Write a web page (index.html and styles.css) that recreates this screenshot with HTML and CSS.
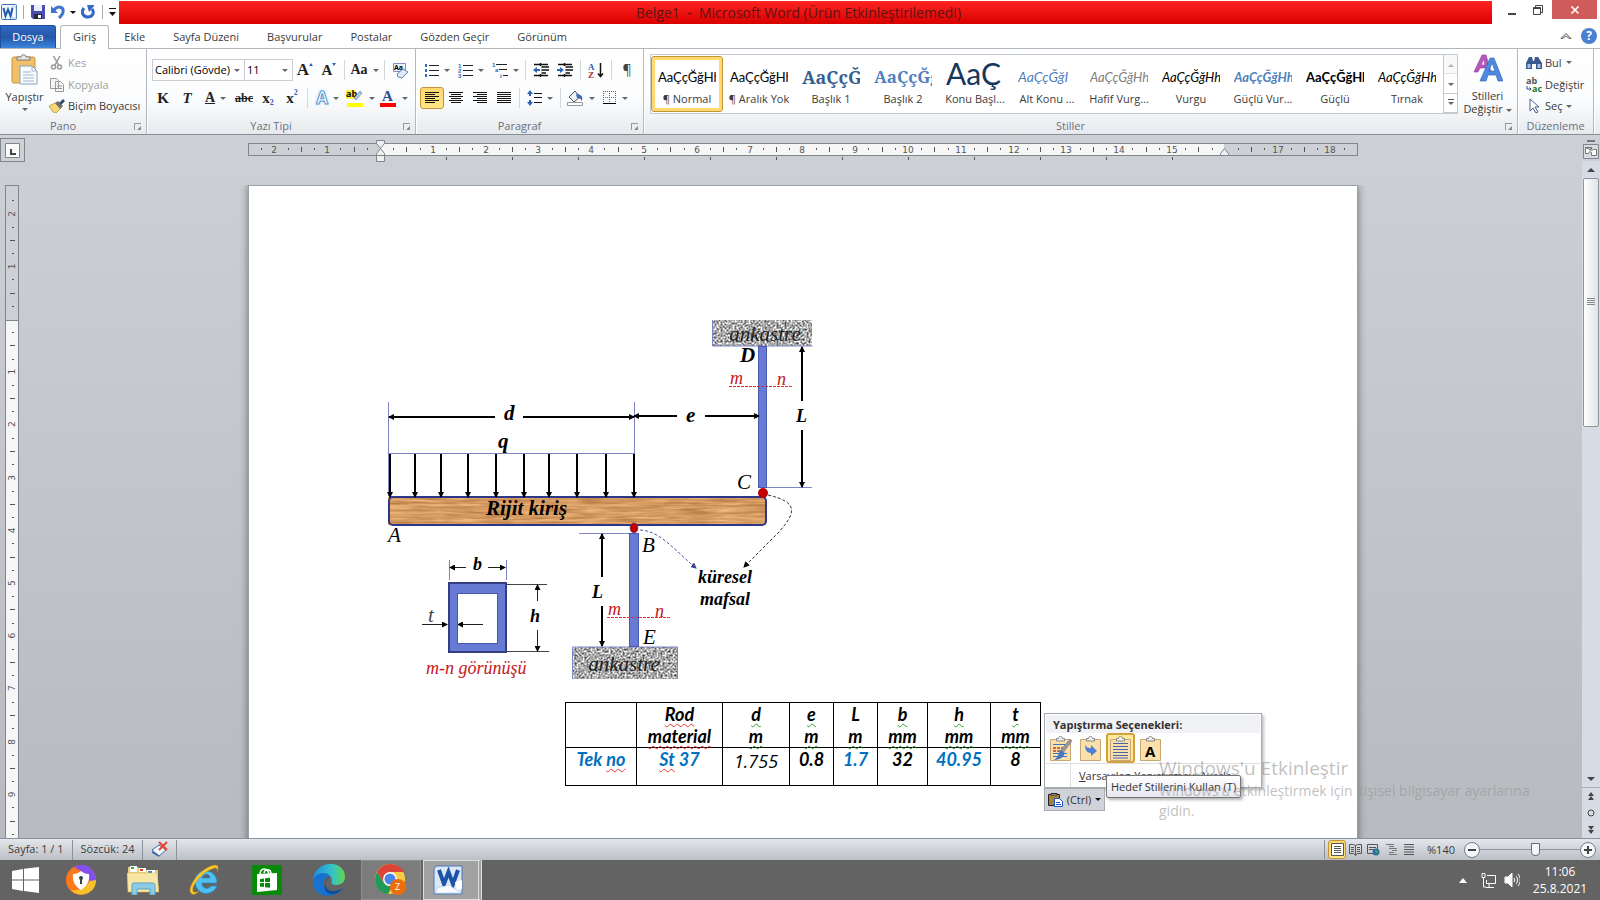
FILE: index.html
```
<!DOCTYPE html>
<html lang="tr">
<head>
    <meta charset="UTF-8">
    <meta name="viewport" content="width=device-width, initial-scale=1.0">
    <title>Belge1 - Microsoft Word</title>
    <link rel="stylesheet" href="styles.css">
</head>
<body>
    <header class="titlebar">
        <div class="quick">
            <svg width="16" height="16" viewBox="0 0 16 16"><rect x=".5" y=".5" width="15" height="15" rx="1" fill="#eef4fc" stroke="#3f6fb5"/><path d="M11 3h4v11h-4z" fill="#fff" stroke="#8aa9d8" stroke-width=".6"/><path d="M2.500 4l2 8 2.500-6.500L9.500 12l2-8" fill="none" stroke="#1f5cab" stroke-width="2"/></svg>
            <span class="bar"></span>
            <button class="tool" aria-label="Kaydet"><svg width="14" height="14" viewBox="0 0 14 14"><path d="M0 0h14v14H2l-2-2z" fill="#4a4fae"/><path d="M3 0h8v6H3z" fill="#e9effa"/><path d="M3 9h8v5H3z" fill="#2b2b3d"/><path d="M7 10h3v3H7z" fill="#fff"/></svg></button>
            <button class="tool wide" aria-label="Geri Al"><svg width="14" height="14" viewBox="0 0 14 14"><path d="M3 5c4-5 10-3 9 2 0 2-2 4-4 6" fill="none" stroke="#3f74cf" stroke-width="3"/><path d="M0 1v7h7z" fill="#3f74cf"/></svg><i class="caret dark"></i></button>
            <button class="tool" aria-label="Yinele"><svg width="14" height="14" viewBox="0 0 14 14"><path d="M3 3c-4 5 0 9 4 9s7-4 4-8" fill="none" stroke="#3468c8" stroke-width="3"/><path d="M6 0h7v1L8 7z" fill="#3468c8"/></svg></button>
            <span class="bar"></span>
            <svg width="8" height="8" viewBox="0 0 8 8"><path d="M0 0h7v1H0zM0 4h7L3.500 8z" fill="#111"/></svg>
        </div>
        <div class="title">Belge1&nbsp; -&nbsp; Microsoft Word (Ürün Etkinleştirilemedi)</div>
        <div class="window-buttons">
            <button aria-label="Simge durumuna küçült"><svg width="12" height="12"><path d="M2 9h8v2H2z" fill="#444"/></svg></button>
            <button aria-label="Önceki boyut"><svg width="12" height="12" fill="none" stroke="#444"><path d="M1.500 3.500h7v7h-7zM1 4.500h8M3.500 3V1.500h7v7H9"/></svg></button>
            <button class="close" aria-label="Kapat"><svg width="10" height="10"><path d="M1.500 1.500l7 7M8.500 1.500l-7 7" stroke="#fff" stroke-width="1.600"/></svg></button>
        </div>
    </header>

    <nav class="tabs">
        <button class="file">Dosya</button>
        <a class="active" href="#">Giriş</a>
        <a href="#">Ekle</a>
        <a href="#">Sayfa Düzeni</a>
        <a href="#">Başvurular</a>
        <a href="#">Postalar</a>
        <a href="#">Gözden Geçir</a>
        <a href="#">Görünüm</a>
        <div class="help">
            <svg width="12" height="8" viewBox="0 0 12 8" fill="none" stroke="#555"><path d="M2.500 6.500H1L6 1.500l5 5H9.500L6 4z"/></svg>
            <button class="help-button" aria-label="Yardım">?</button>
        </div>
    </nav>

    <section class="ribbon">
        <div class="group clipboard">
            <div class="group-body">
                <button class="paste">
                    <svg width="28" height="32" viewBox="0 0 28 32"><rect x="1" y="3" width="23" height="26" rx="2" fill="#f0bf68" stroke="#c8943c"/><path d="M6 6V3h4c0-3 5-3 5 0h4v3z" fill="#e8e8e8" stroke="#777"/><path d="M9 12h12l5 5v13H9z" fill="#fafdff" stroke="#8aa0bd"/><path d="M21 12v5h5M12 18h8M12 21h11M12 24h11M12 27h11" fill="none" stroke="#9bb3cf"/></svg>
                    <span>Yapıştır</span>
                    <i class="caret"></i>
                </button>
                <div class="stack">
                    <button class="line off"><svg width="16" height="14" viewBox="0 0 16 14" fill="none" stroke="#999" stroke-width="1.500"><path d="M4.500 0l5 9M11 0L6 9"/><circle cx="4.500" cy="11" r="2"/><circle cx="10.500" cy="11" r="2"/></svg>Kes</button>
                    <button class="line off"><svg width="16" height="14" viewBox="0 0 16 14" fill="#f4f4f4" stroke="#999"><path d="M1.500.5h6l2 2v8h-8zM6.500 3.500h5l3 3v7h-8zM8 8h5M8 10.500h5"/></svg>Kopyala</button>
                    <button class="line"><svg width="16" height="14" viewBox="0 0 16 14"><path d="M0 7l6-3 6 5-5 5-3-1z" fill="#f6d873" stroke="#a8862c" stroke-width=".7"/><path d="M6 4l3-2 5 5-3 3z" fill="#707070"/><path d="M10 4l4-4 2 2-4 4z" fill="#34496f"/></svg>Biçim Boyacısı</button>
                </div>
            </div>
            <div class="group-name">Pano<i class="launcher"></i></div>
        </div>

        <div class="group font">
            <div class="group-body rows">
                <div class="row">
                    <span class="combo family"><select aria-label="Yazı Tipi"><option>Calibri (Gövde)</option></select></span>
                    <span class="combo size"><select aria-label="Yazı Tipi Boyutu"><option>11</option></select></span>
                    <button class="tool serif big">A<sup class="up"></sup></button>
                    <button class="tool serif">A<sup class="down"></sup></button>
                    <span class="sep"></span>
                    <button class="tool wide serif">Aa<i class="caret"></i></button>
                    <span class="sep"></span>
                    <button class="tool" aria-label="Biçimlendirmeyi Temizle"><svg width="17" height="17" viewBox="0 0 17 17"><path d="M1.500 1.500h12v8h-12z" fill="#eef3fb" stroke="#7c93b8"/><text x="2" y="8" class="tiny">Aa</text><path d="M5 12l6-5 5 3-6 6-4-1z" fill="#dde7fa" stroke="#6a83b5"/></svg></button>
                </div>
                <div class="row">
                    <button class="tool serif"><b>K</b></button>
                    <button class="tool serif"><i>T</i></button>
                    <button class="tool wide serif"><u>A</u><i class="caret"></i></button>
                    <button class="tool serif small"><s>abc</s></button>
                    <button class="tool serif">x<sub>2</sub></button>
                    <button class="tool serif">x<sup>2</sup></button>
                    <span class="sep"></span>
                    <button class="tool wide glow">A<i class="caret"></i></button>
                    <button class="tool wide" aria-label="Vurgu rengi"><svg width="18" height="18" viewBox="0 0 18 18"><path d="M0 1h10v9H0z" fill="#ffef3e"/><text x="0" y="8" class="ab">ab</text><path d="M8 9l6-7 2 2-6 7z" fill="#b8c9e6" stroke="#667a9c" stroke-width=".7"/><path d="M1 14h16v4H1z" fill="#ff0"/></svg><i class="caret"></i></button>
                    <button class="tool wide" aria-label="Yazı rengi"><svg width="18" height="18" viewBox="0 0 18 18"><text x="3" y="12" class="fontcolor">A</text><path d="M1 14h16v4H1z" fill="red"/></svg><i class="caret"></i></button>
                </div>
            </div>
            <div class="group-name">Yazı Tipi<i class="launcher"></i></div>
        </div>

        <div class="group paragraph">
            <div class="group-body rows">
                <div class="row">
                    <button class="tool wide" aria-label="Madde İşaretleri"><svg width="14" height="14"><path d="M4 2.500h10M4 7.500h10M4 12.500h10" stroke="#222"/><path d="M0 1h2v3H0zM0 6h2v3H0zM0 11h2v3H0z" fill="#3b66b0"/></svg><i class="caret"></i></button>
                    <button class="tool wide" aria-label="Numaralandırma"><svg width="15" height="15"><path d="M5 2.500h10M5 7.500h10M5 12.500h10" stroke="#222"/><text x="0" y="5" class="digit">1</text><text x="0" y="10" class="digit">2</text><text x="0" y="15" class="digit">3</text></svg><i class="caret"></i></button>
                    <button class="tool wide" aria-label="Çok Düzeyli Liste"><svg width="16" height="16"><path d="M4 2.500h11M7 7.500h8M11 13.500h5" stroke="#222"/><text x="0" y="5" class="digit">1</text><text x="3" y="10" class="digit">a</text><text x="8" y="16" class="digit">i</text></svg><i class="caret"></i></button>
                    <span class="sep"></span>
                    <button class="tool" aria-label="Girintiyi Azalt"><svg width="16" height="14"><path d="M1 1.500h14M8 4h8M8 7h8M8 10h5M1 12.500h14M7.500 0v14" stroke="#111" stroke-width="1.500"/><path d="M7 3v8" stroke="#fff" stroke-width="3"/><path d="M0 7l4-3v2h3v2H4v2z" fill="#2f62bd"/></svg></button>
                    <button class="tool" aria-label="Girintiyi Artır"><svg width="16" height="14"><path d="M1 1.500h14M8 4h8M8 7h8M8 10h5M1 12.500h14M7.500 0v14" stroke="#111" stroke-width="1.500"/><path d="M7 3v8" stroke="#fff" stroke-width="3"/><path d="M7 7L3 4v2H0v2h3v2z" fill="#2f62bd"/></svg></button>
                    <span class="sep"></span>
                    <button class="tool" aria-label="Sırala"><svg width="16" height="17"><text x="0" y="8" class="sort-a">A</text><text x="0" y="16" class="sort-z">Z</text><path d="M12.500 1v13M10 11.500l2.500 3 2.500-3" fill="none" stroke="#111" stroke-width="1.500"/></svg></button>
                    <span class="sep"></span>
                    <button class="tool mark">¶</button>
                </div>
                <div class="row">
                    <button class="tool on" aria-label="Sola Hizala"><svg width="14" height="12"><path d="M0 .5h14M0 2.500h10M0 4.500h14M0 6.500h10M0 8.500h14M0 10.500h10" stroke="#111"/></svg></button>
                    <button class="tool" aria-label="Ortala"><svg width="14" height="12"><path d="M0 .5h14M2 2.500h10M0 4.500h14M2 6.500h10M0 8.500h14M2 10.500h10" stroke="#111"/></svg></button>
                    <button class="tool" aria-label="Sağa Hizala"><svg width="14" height="12"><path d="M0 .5h14M4 2.500h10M0 4.500h14M4 6.500h10M0 8.500h14M4 10.500h10" stroke="#111"/></svg></button>
                    <button class="tool" aria-label="İki Yana Yasla"><svg width="14" height="12"><path d="M0 .5h14M0 2.500h14M0 4.500h14M0 6.500h14M0 8.500h14M0 10.500h14" stroke="#111"/></svg></button>
                    <span class="sep"></span>
                    <button class="tool wide" aria-label="Satır Aralığı"><svg width="15" height="16"><path d="M7 3.500h8M7 7.500h8M7 12.500h8" stroke="#111"/><path d="M0 4l3-4 3 4H4v2H2V4zM0 12l3 4 3-4H4v-2H2v2z" fill="#2f62bd"/></svg><i class="caret"></i></button>
                    <span class="sep"></span>
                    <button class="tool wide" aria-label="Gölgelendirme"><svg width="17" height="16"><path d="M2 7l6-6 5 6-6 5z" fill="#eef2f8" stroke="#555"/><path d="M9 4c5 0 7 2 6 7-2-3-3-3-5-3z" fill="#3c69b8"/><path d="M.5 12.500h15v3H.5z" fill="#fff" stroke="#999"/></svg><i class="caret"></i></button>
                    <button class="tool wide" aria-label="Kenarlıklar"><svg width="14" height="14"><path d="M.5 0v12M6.500 0v12M12.500 0v12M0 .5h13M0 6.500h13" stroke="#666" stroke-dasharray="1 1"/><path d="M0 12.500h13" stroke="#000"/></svg><i class="caret"></i></button>
                </div>
            </div>
            <div class="group-name">Paragraf<i class="launcher"></i></div>
        </div>

        <div class="group styles">
            <div class="group-body">
                <div class="gallery">
                    <button class="style selected"><span class="sample">AaÇçĞğHh</span><span>¶ Normal</span></button>
                    <button class="style"><span class="sample">AaÇçĞğHh</span><span>¶ Aralık Yok</span></button>
                    <button class="style"><span class="sample h1">AaÇçĞğ</span><span>Başlık 1</span></button>
                    <button class="style"><span class="sample h2">AaÇçĞğ</span><span>Başlık 2</span></button>
                    <button class="style"><span class="sample heading">AaÇ</span><span>Konu Başl...</span></button>
                    <button class="style"><span class="sample subtitle">AaÇçĞğI</span><span>Alt Konu ...</span></button>
                    <button class="style"><span class="sample it light">AaÇçĞğHh</span><span>Hafif Vurg...</span></button>
                    <button class="style"><span class="sample it">AaÇçĞğHh</span><span>Vurgu</span></button>
                    <button class="style"><span class="sample it strong blue">AaÇçĞğHh</span><span>Güçlü Vur...</span></button>
                    <button class="style"><span class="sample strong">AaÇçĞğHh</span><span>Güçlü</span></button>
                    <button class="style"><span class="sample it">AaÇçĞğHh</span><span>Tırnak</span></button>
                    <div class="gallery-scroll">
                        <button aria-label="Yukarı"><i class="caret flip"></i></button>
                        <button aria-label="Aşağı"><i class="caret"></i></button>
                        <button aria-label="Diğer"><i class="caret lined"></i></button>
                    </div>
                </div>
                <button class="change">
                    <svg width="30" height="28" viewBox="0 0 30 28"><path d="M1 18L9 1h4l5 17h-4l-1-4H7l-2 4zM8 11h4l-1-6z" fill="#b557bd" stroke="#8a3a95" stroke-width=".6"/><path d="M7 27L17 4h4l9 23h-5l-2-6h-8l-2 6zM16 17h6l-3-8z" fill="#4d8be0" stroke="#2b5fae" stroke-width=".6"/></svg>
                    <span>Stilleri</span>
                    <span>Değiştir <i class="caret"></i></span>
                </button>
            </div>
            <div class="group-name">Stiller<i class="launcher"></i></div>
        </div>

        <div class="group editing">
            <div class="group-body">
                <div class="stack">
                    <button class="line"><svg width="16" height="14" viewBox="0 0 16 14"><path d="M0 13V7l3-6h3l1 4h1l1-4h3l4 6v6h-6V8H6v5z" fill="#39598f"/><path d="M1.500 8h3v4h-3zM11.500 8h3v4h-3z" fill="#a8c0e4"/></svg>Bul <i class="caret"></i></button>
                    <button class="line"><svg width="16" height="16" viewBox="0 0 16 16"><text x="0" y="7" class="rep">ab</text><text x="6" y="15" class="rep green">ac</text><path d="M1 9v3h4M3.500 10.500L5 12l-1.500 1.500" fill="none" stroke="#2c4f94"/></svg>Değiştir</button>
                    <button class="line"><svg width="16" height="16" viewBox="0 0 16 16"><path d="M4 1v12l3-3 3 5 2-1-3-5h4z" fill="#fff" stroke="#46608f"/></svg>Seç <i class="caret"></i></button>
                </div>
            </div>
            <div class="group-name">Düzenleme</div>
        </div>
    </section>

    <main class="workspace">
        <button class="tab-stop" aria-label="Sekme"><svg width="15" height="15"><path d="M.5.5h14v14H.5z" fill="#fafafa" stroke="#7f868e"/><path d="M5 6v6h6v-2H7V6z" fill="#444"/></svg></button>
        <svg id="hruler" class="hruler" width="1111" height="24" viewBox="0 0 1111 24"></svg>
        <div class="ruler-toggle"><span></span><svg width="16" height="16" fill="none" stroke="#7f868e"><path d="M.5.5h15v14H.5z" fill="#d8dce1"/><path d="M3 3.500h4l1 2 1-2h-2M2.500 3.500v6h3l1-2 2 1v3h5v-6h-3l-2 1z" fill="#fff" stroke="#777"/></svg></div>

        <svg id="vruler" class="vruler" width="14" height="1400" viewBox="0 0 14 1400"></svg>
        <div class="canvas">
            <article class="page">
                <svg class="beam" width="460" height="385" viewBox="0 0 460 385">
                    <defs>
                        <filter id="granite" x="0" y="0" width="100%" height="100%" color-interpolation-filters="sRGB">
                            <feTurbulence type="fractalNoise" baseFrequency="0.5" numOctaves="2" seed="4"/>
                            <feColorMatrix values="1.500 0 0 0 -.08  1.500 0 0 0 -.08  1.500 0 0 0 -.08  0 0 0 0 1"/>
                        </filter>
                        <filter id="wood" x="0" y="0" width="100%" height="100%" color-interpolation-filters="sRGB">
                            <feTurbulence type="fractalNoise" baseFrequency="0.03 0.4" numOctaves="3" seed="8"/>
                            <feColorMatrix values=".35 0 0 0 .66  .35 0 0 0 .43  .3 0 0 0 .23  0 0 0 0 1"/>
                        </filter>
                        <marker id="arrow" markerUnits="userSpaceOnUse" markerWidth="6" markerHeight="6" refX="5" refY="3" orient="auto-start-reverse"><path d="M0 0l6 3-6 3z" fill="#000"/></marker>
                        <marker id="arrow-blue" markerUnits="userSpaceOnUse" markerWidth="6" markerHeight="6" refX="5" refY="3" orient="auto"><path d="M0 0l6 3-6 3z" fill="#3a4390"/></marker>
                    </defs>

                    <!-- walls -->
                    <rect x="333" y="3" width="100" height="26" filter="url(#granite)"/>
                    <rect x="193" y="330" width="105" height="32" filter="url(#granite)"/>
                    <path class="thin" d="M333.500 3v26h100M193.500 362v-32h105v32"/>
                    <text x="386" y="24" class="wall">ankastre</text>
                    <text x="245" y="354" class="wall">ankastre</text>

                    <!-- rods -->
                    <rect class="rod" x="379.500" y="29.500" width="8" height="141"/>
                    <rect class="rod" x="250.500" y="216.500" width="9" height="113"/>

                    <!-- beam -->
                    <rect x="9" y="180" width="378" height="28" filter="url(#wood)"/>
                    <rect class="beam-edge" x="10" y="180" width="377" height="28" rx="4"/>
                    <path class="thin" d="M9.500 85v94M255.500 85v52M9 136.500h246M388 170.500h45M200 216.500h50M70.500 243v20M127.500 243v20"/>
                    <path d="M128 267.500h40M128 334.500h42" stroke="#444"/>

                    <g class="load">
                        <path d="M11 137v43"/><path d="M36 137v43"/><path d="M62 137v43"/><path d="M89 137v43"/><path d="M117 137v43"/>
                        <path d="M145 137v43"/><path d="M170 137v43"/><path d="M198 137v43"/><path d="M227 137v43"/><path d="M255 137v43"/>
                        <path d="M116 100H10"/><path d="M144 100h111"/><path d="M298 99h-43"/><path d="M326 99h54"/>
                        <path d="M423 84V30"/><path d="M423 113v57"/><path d="M223 260v-43"/><path d="M223 289v40"/>
                    </g>
                    <g class="measure">
                        <path d="M87 250.500H71"/><path d="M109 250.500h17"/><path d="M158.500 284v-16"/><path d="M158.500 313v21"/>
                        <path d="M43 307.500h25"/><path d="M104 307.500H79"/>
                    </g>

                    <path class="cut" d="M350 69.500h63M228 300.500h64"/>
                    <ellipse cx="384" cy="176" rx="5" ry="5" fill="#c00000"/>
                    <ellipse cx="255" cy="211" rx="4" ry="5" fill="#c00000" stroke="#3a4390" stroke-width=".5"/>
                    <path class="dash blue-dash" d="M261 213c20 1 32 18 56 38"/>
                    <path class="dash" d="M389 178c30 7 29 17 10 38l-34 34"/>

                    <!-- tube section -->
                    <path d="M70 266h57v69H70zM78 276v51h41v-51z" fill="#677bd5" fill-rule="evenodd"/>
                    <rect x="70" y="266" width="57" height="69" fill="none" stroke="#343d80" stroke-width="2"/>
                    <rect x="78.500" y="276.500" width="40" height="50" fill="none" stroke="#4a55a5"/>

                    <text x="361" y="45" class="bold">D</text>
                    <text x="358" y="172">C</text>
                    <text x="9" y="225">A</text>
                    <text x="263" y="235">B</text>
                    <text x="264" y="327">E</text>
                    <text x="125" y="103" class="bold">d</text>
                    <text x="119" y="131" class="bold">q</text>
                    <text x="307" y="105" class="bold">e</text>
                    <text x="417" y="105" class="name">L</text>
                    <text x="213" y="281" class="name">L</text>
                    <text x="94" y="253" class="name">b</text>
                    <text x="151" y="305" class="name">h</text>
                    <text x="49" y="305" class="thin-text">t</text>
                    <text x="107" y="198" class="bold">Rijit kiriş</text>
                    <text x="346" y="266" class="joint">küresel</text>
                    <text x="346" y="288" class="joint">mafsal</text>
                    <g class="red">
                        <text x="351" y="67">m</text>
                        <text x="398" y="68">n</text>
                        <text x="229" y="298">m</text>
                        <text x="276" y="300">n</text>
                        <text x="47" y="357">m-n görünüşü</text>
                    </g>
                </svg>

                <div class="table-line">
                    <table class="values">
                        <colgroup><col class="c71"><col class="c86"><col class="c67"><col class="c44"><col class="c44"><col class="c50"><col class="c63"><col class="c50"></colgroup>
                        <tr>
                            <th></th>
                            <th><span class="bad">Rod</span><br><span class="bad">material</span></th>
                            <th><span class="gram">d</span><br><span class="gram">m</span></th>
                            <th><span class="gram">e</span><br><span class="gram">m</span></th>
                            <th>L<br><span class="gram">m</span></th>
                            <th><span class="gram">b</span><br><span class="gram">mm</span></th>
                            <th><span class="gram">h</span><br><span class="gram">mm</span></th>
                            <th><span class="gram">t</span><br><span class="gram">mm</span></th>
                        </tr>
                        <tr>
                            <td class="blue">Tek <span class="bad">no</span></td>
                            <td class="blue"><span class="bad">St</span> 37</td>
                            <td class="plain">1.755</td>
                            <td>0.8</td>
                            <td class="blue">1.7</td>
                            <td>32</td>
                            <td class="blue">40.95</td>
                            <td>8</td>
                        </tr>
                    </table>

                    <div class="paste-options">
                        <div class="paste-menu">
                            <div class="paste-title">Yapıştırma Seçenekleri:</div>
                            <div class="paste-icons">
                                <button aria-label="Kaynak Biçimlendirmesini Koru"><svg width="23" height="25" viewBox="0 0 23 25"><path class="board" d="M1.500 3.500h20v21h-20z"/><path class="clip" d="M7.500 5V2.500h2c0-3 4-3 4 0h2V5z"/><path d="M4 8.500h14M4 17.500h14M4 20.500h14" stroke="#4472c4"/><path d="M4 12h12M4 15h10" stroke="#c33c1e" stroke-width="1.500" stroke-dasharray="3 1"/><path d="M21 3l2 2-9 12-3-2z" fill="#999" stroke="#666" stroke-width=".5"/><path d="M12 14l4 3c-2 5-6 7-11 7 4-2 4-7 7-10z" fill="#4a78c0"/></svg></button>
                                <button aria-label="Biçimlendirmeyi Birleştir"><svg width="23" height="25" viewBox="0 0 23 25"><path class="board" d="M1.500 3.500h20v21h-20z"/><path class="clip" d="M7.500 5V2.500h2c0-3 4-3 4 0h2V5z"/><path d="M6 9c2 3 4 3 6 3V9l6 6-6 5v-3c-4 0-6-3-6-8z" fill="#4c7fd6"/></svg></button>
                                <button class="picked" aria-label="Hedef Stillerini Kullan"><svg width="23" height="25" viewBox="0 0 23 25"><path class="board" d="M1.500 3.500h20v21h-20z"/><path class="clip" d="M7.500 5V2.500h2c0-3 4-3 4 0h2V5z"/><path d="M4 7.500h15M4 10.500h15M4 13.500h15M4 16.500h15M4 19.500h15M4 22h15" stroke="#4a62b0"/></svg></button>
                                <button aria-label="Yalnızca Metni Koru"><svg width="23" height="25" viewBox="0 0 23 25"><path class="board" d="M1.500 3.500h20v21h-20z"/><path class="clip" d="M7.500 5V2.500h2c0-3 4-3 4 0h2V5z"/><text x="6" y="21" class="only-text">A</text></svg></button>
                            </div>
                            <a class="paste-default" href="#"><u>V</u>arsayılan Yapıştırmayı Ayarla...</a>
                        </div>
                        <button class="ctrl"><svg width="15" height="15" viewBox="0 0 15 15"><path d="M.5 2.500h11v11H.5z" fill="#a5813a" stroke="#222"/><path d="M3 3V1.500h6V3z" fill="#fff" stroke="#222"/><path d="M6.500 6.500h5l3 3v5h-8z" fill="#fff" stroke="#1b55c4"/><path d="M8 10.500h4M8 12.500h5" stroke="#1b55c4"/></svg>(Ctrl)<i class="caret dark"></i></button>
                        <div class="tooltip">Hedef Stillerini Kullan (T)</div>
                    </div>
                </div>
            </article>
        </div>
        <div class="scrollbar">
            <button aria-label="Yukarı kaydır"><i class="caret big flip"></i></button>
            <div class="track"><div class="thumb"><svg width="8" height="8"><path d="M0 .5h8M0 2.500h8M0 4.500h8M0 6.500h8" stroke="#888"/></svg></div></div>
            <button aria-label="Aşağı kaydır"><i class="caret big"></i></button>
            <button class="first" aria-label="Önceki Sayfa"><svg width="8" height="8"><path d="M1 4l3-4 3 4zM1 8l3-4 3 4z" fill="#444"/></svg></button>
            <button aria-label="Gözatma Nesnesi"><svg width="8" height="8"><circle cx="4" cy="4" r="3" fill="none" stroke="#444"/></svg></button>
            <button aria-label="Sonraki Sayfa"><svg width="8" height="8"><path d="M1 0h6L4 4zM1 4h6L4 8z" fill="#444"/></svg></button>
        </div>

        <div class="activate">
            <h2>Windows'u Etkinleştir</h2>
            <p>Windows'u etkinleştirmek için kişisel bilgisayar ayarlarına gidin.</p>
        </div>
    </main>

    <footer class="status">
        <span class="cell">Sayfa: 1 / 1</span>
        <span class="cell">Sözcük: 24</span>
        <span class="cell"><svg width="17" height="16" viewBox="0 0 17 16"><path d="M1 9l7-5 7 5-7 6z" fill="#f2f6fc" stroke="#4468a8"/><path d="M1 10v2l7 4v-2z" fill="#4468a8"/><path d="M8 1l8 8M16 1L8 9" stroke="#e8432e" stroke-width="2"/></svg></span>
        <div class="views">
            <button class="on" aria-label="Sayfa Düzeni"><svg width="13" height="13"><path d="M.5.5h12v12H.5z" fill="#fff" stroke="#555"/><path d="M3 3.500h7M3 5.500h7M3 7.500h7M3 9.500h7" stroke="#555"/></svg></button>
            <button aria-label="Tam Ekran Okuma"><svg width="13" height="13"><path d="M.5 1.500h4l2 1 2-1h4v9h-4l-2 2-2-2h-4zM6.500 2v10M2 4.500h3M2 6.500h3M2 8.500h3M8 4.500h3M8 6.500h3M8 8.500h3" fill="none" stroke="#555"/></svg></button>
            <button aria-label="Web Düzeni"><svg width="13" height="13"><path d="M.5 1.500h10v9H.5zM2 4.500h7M2 6.500h7" fill="none" stroke="#555"/><circle cx="9" cy="9" r="3.500" fill="#2d6f9f"/><path d="M8 7l3 1-2 3z" fill="#49a55a"/></svg></button>
            <button aria-label="Anahat"><svg width="13" height="13"><path d="M1 1.500h8M4 3.500h5M4 5.500h8M7 7.500h5M4 9.500h5M4 11.500h8" stroke="#777"/></svg></button>
            <button aria-label="Taslak"><svg width="13" height="13"><path d="M1 1.500h10M1 4h10M1 6.500h10M1 9h10M1 11.500h10" stroke="#555"/></svg></button>
        </div>
        <button class="zoom-value">%140</button>
        <div class="zoom">
            <button class="round" aria-label="Uzaklaştır"><svg width="8" height="8"><path d="M0 4h8" stroke="#444" stroke-width="2"/></svg></button>
            <input type="range" min="0" max="100" value="56" aria-label="Yakınlaştırma">
            <button class="round" aria-label="Yakınlaştır"><svg width="8" height="8"><path d="M0 4h8M4 0v8" stroke="#444" stroke-width="2"/></svg></button>
        </div>
    </footer>

    <div class="taskbar">
        <button class="start" aria-label="Başlat"><svg width="27" height="26" viewBox="0 0 27 26" fill="#fff"><path d="M0 4l11-2v10.500H0zM12 1.800L27 0v12.500H12zM0 13.500h11V24L0 22zM12 13.500h15V26l-15-2z"/></svg></button>
        <button aria-label="Avast Secure Browser"><svg width="32" height="32" viewBox="0 0 32 32"><circle cx="16" cy="16" r="15" fill="#f9791c"/><path d="M9 3c9-6 22 0 22 14l-6 2C24 10 17 8 9 3z" fill="#8350ee"/><path d="M31 16c0 14-17 19-25 10 9 1 15-2 19-9z" fill="#f6c22c"/><path d="M8 10c3 0 6-1 8-3 2 2 5 3 8 3 1 8-3 13-8 16-5-3-9-8-8-16z" fill="#fff"/><circle cx="16" cy="14" r="2" fill="#344"/><path d="M15 14h2v6h-2z" fill="#344"/></svg></button>
        <button aria-label="Dosya Gezgini"><svg width="32" height="30" viewBox="0 0 32 30"><path d="M1 2h10l2 3h18v22H1z" fill="#e9cf7c"/><path d="M3 1h7v6H3z" fill="#fff"/><path d="M4 2h3v2H4z" fill="#2aa84a"/><path d="M12 3h7v4h-7z" fill="#fff"/><path d="M13 4h3v2h-3z" fill="#d8402a"/><path d="M20 5h8v3h-8z" fill="#fff"/><path d="M21 6h4v2h-4z" fill="#2f87d8"/><path d="M0 8h30l2 19H1z" fill="#f8e6a4" stroke="#d5b75b" stroke-width=".5"/><path d="M5 30V20c0-2 1-2 2-2h19c1 0 2 1 2 2v10h-5v-6H10v6z" fill="#8dcae6" stroke="#5ba3c6"/></svg></button>
        <button aria-label="Internet Explorer"><svg width="32" height="32" viewBox="0 0 32 32"><path d="M28 22c-5 12-23 9-22-6C7 4 28 3 28 19H13c0 6 6 7 9 3zM13 14h8c0-5-7-5-8 0z" fill="#4fc0f0" stroke="#2186c8" stroke-width=".7"/><path d="M3 30C-4 27 8 7 22 2c8-3 8 2 6 6 1-4-1-5-5-3C12 9 2 23 4 27c1 2 4 1 6 0-3 3-5 4-7 3z" fill="#f5c52c" stroke="#c18c12" stroke-width=".4"/></svg></button>
        <button aria-label="Mağaza"><svg width="30" height="30" viewBox="0 0 30 30"><path d="M0 0h30v30H0z" fill="#088a08"/><path d="M5 9l20-1v17L5 27z" fill="#fff"/><path d="M8 10c0-8 8-8 9 0M12 8c1-5 7-4 7 1" fill="none" stroke="#fff" stroke-width="1.500"/><path d="M8 14l4-.5V17H8zM13 13.300l5-.5V17h-5zM8 18h4v4l-4-.5zM13 18h5v4.700l-5-.5z" fill="#088a08"/></svg></button>
        <button aria-label="Microsoft Edge"><svg width="32" height="32" viewBox="0 0 32 32"><defs><linearGradient id="edge" x1="0" x2="1"><stop offset="0" stop-color="#1d8fe0"/><stop offset=".6" stop-color="#35c1c8"/><stop offset="1" stop-color="#5fd84a"/></linearGradient></defs><path d="M0 16C2-5 32-5 32 13c0 6-5 8-9 8-5 0-5-3-4-5C18 8 6 8 0 16z" fill="url(#edge)"/><path d="M0 16c3-8 14-9 17-4-9 1-9 14 2 15 6 0 9-2 11-3-7 12-32 11-30-8z" fill="#1773cf"/><path d="M17 12c-7 4-6 14 2 15 6 0 9-2 11-3-9 13-28 4-13-12z" fill="#0d4f9e"/></svg></button>
        <button class="open" aria-label="Google Chrome"><svg width="32" height="32" viewBox="0 0 32 32"><circle cx="15" cy="15" r="15" fill="#f8cb45"/><path d="M2 8c6-11 22-10 27 0H15L9 19z" fill="#dc4437"/><path d="M2 8l7 11c2 3 6 4 9 2l-5 9C2 29-3 17 2 8z" fill="#249a59"/><circle cx="15" cy="15" r="7" fill="#fff"/><circle cx="15" cy="15" r="5.500" fill="#4a86ea"/><circle cx="23" cy="23" r="8" fill="#ee6c0a"/><text x="20" y="26" class="badge">Z</text></svg></button>
        <button class="open active" aria-label="Microsoft Word"><svg width="30" height="30" viewBox="0 0 30 30"><path d="M3 1h26v28H1V4z" fill="#dce8f8" stroke="#4a76b8"/><path d="M6 5l5 14 4.500-12L20 19l5-14" fill="none" stroke="#1c55a6" stroke-width="4"/><path d="M4 23l12-3 12 8H3z" fill="#f7faff" stroke="#a9bfdd" stroke-width=".5"/><path d="M22 17l7-2v9l-5 1z" fill="#fff"/></svg></button>
        <div class="tray">
            <svg width="8" height="5"><path d="M0 5l4-5 4 5z" fill="#fff"/></svg>
            <svg width="15" height="15" viewBox="0 0 15 15" fill="none" stroke="#fff"><path d="M6 2.500h8.500v8H5.500V7M8 11v3M5 14.500h8M1 .5h3v4H1zM2.500 5v9H5"/></svg>
            <svg width="16" height="16" viewBox="0 0 16 16" fill="none" stroke="#fff"><path d="M1 5h3l4-4v14l-4-4H1z" fill="#fff"/><path d="M10 6c1 1 1 3 0 4M12 4c2 2 2 6 0 8M14 2c3 3 3 9 0 12"/></svg>
            <div class="clock">11:06<br>25.8.2021</div>
        </div>
    </div>

    <script>
        const CM = 52.8;

        function tick(x, y, length) {
            return `<path d="M${Math.round(x) + 0.5} ${y}v${length}" stroke="#555"/>`;
        }

        // zero: where the text area starts, size: ruler length, skip: label under a marker
        function marks(zero, size, skip, flip) {
            let out = '';
            for (let q = -Math.floor(zero / CM * 4); zero + q * CM / 4 < size - 4; q++) {
                let x = zero + q * CM / 4;
                if (q === 0 || q === skip * 4 || x < 8) continue;
                if (q % 4 === 0) {
                    let turn = flip ? ` transform="rotate(180 ${x} 7)"` : '';
                    out += `<text x="${Math.round(x)}" y="10" text-anchor="middle"${turn}>${Math.abs(q / 4)}</text>`;
                } else if (q % 2 === 0) {
                    out += tick(x, 4, 5);
                } else {
                    out += tick(x, 5, 2);
                }
            }
            return out;
        }

        let tabs = '';
        for (let i = 1; i < 13; i++) tabs += tick(132 + i * 66, 19, 3);

        document.getElementById('hruler').innerHTML = `
            <rect x=".5" y="5.5" width="1109" height="12" fill="#cdd1d6" stroke="#7f868e"/>
            <rect x="132" y="6" width="844" height="11" fill="#f6f6f7"/>
            <g transform="translate(0 5)">${marks(132, 1110, 16)}</g>
            ${tabs}
            <path d="M128.5 2.5h8v3l-4 5-4-5zM128.5 17.5v-2l4-5 4 5v2zM128.5 17.5h8v6h-8z" fill="#eee" stroke="#7f868e"/>
            <path d="M972.5 17.5v-2l4-5 4 5v2z" fill="#eee" stroke="#7f868e"/>`;

        document.getElementById('vruler').innerHTML = `
            <rect x=".5" y=".5" width="13" height="1399" fill="#f6f6f7" stroke="#7f868e"/>
            <rect x=".5" y=".5" width="13" height="135" fill="#cdd1d6" stroke="#7f868e"/>
            <g transform="translate(14 0) rotate(90)">${marks(134, 1400, 99, true)}</g>`;
    </script>
</body>
</html>
```
FILE: styles.css
```
* {
    box-sizing: border-box;
}
body {
    margin: 0;
    height: 100vh;
    display: flex;
    flex-direction: column;
    overflow: hidden;
    background: #fff;
    color: #3b3b3b;
    font-family: "Open Sans", "Noto Sans", sans-serif;
    font-size: 11px;
    line-height: 14px;
}
button {
    margin: 0;
    padding: 0;
    border: 0;
    background: none;
    color: inherit;
    font: inherit;
}
a {
    color: inherit;
    text-decoration: none;
}
svg {
    display: block;
    flex: none;
}
.caret {
    display: inline-block;
    flex: none;
    border: solid transparent;
    border-width: 3px 3px 0;
    border-top-color: #666;
    vertical-align: middle;
}
.caret.dark {
    border-top-color: #111;
}
.caret.big {
    border-width: 4px 4px 0;
    border-top-color: #444;
}
.flip {
    transform: rotate(180deg);
}
.lined {
    position: relative;
}
.lined::before {
    content: "";
    position: absolute;
    left: -3px;
    top: -6px;
    width: 6px;
    height: 1px;
    background: #555;
}

/* title bar */
.titlebar {
    display: flex;
    height: 24px;
}
.quick {
    width: 119px;
    display: flex;
    align-items: center;
    gap: 3px;
    padding-left: 1px;
}
.bar {
    width: 1px;
    height: 14px;
    margin: 0 3px;
    background: #aaa;
}
.quick .tool {
    width: 16px;
}
.quick .wide {
    width: 28px;
}
.title {
    flex: 1;
    margin-top: 1px;
    padding-right: 14px;
    background: linear-gradient(#ff2420, #d90000);
    color: #5c1414;
    text-align: center;
    font-size: 14px;
    line-height: 23px;
}
.window-buttons {
    width: 108px;
    display: flex;
    align-items: flex-start;
    padding-left: 7px;
}
.window-buttons button {
    width: 26px;
    height: 19px;
    display: flex;
    align-items: center;
    justify-content: center;
}
.window-buttons .close {
    width: 45px;
    margin-left: 1px;
    background: #cf5c5a;
}

/* tabs */
.tabs {
    height: 25px;
    display: flex;
    align-items: stretch;
    line-height: 25px;
    border-bottom: 1px solid #b1b6bc;
}
.tabs a {
    padding: 0 14px;
}
.tabs .file {
    width: 56px;
    margin: 1px 4px 0 0;
    border: 1px solid #1e4f9c;
    border-bottom: 0;
    border-radius: 0 3px 0 0;
    background: linear-gradient(#2f6bc4, #2457a8 50%, #3b84dc);
    color: #fff;
    line-height: 22px;
}
.tabs .active {
    margin: 1px 1px -1px 0;
    padding: 0 12px;
    border: 1px solid #b1b6bc;
    border-bottom: 0;
    border-radius: 3px 3px 0 0;
    background: #fff;
    line-height: 22px;
}
.help {
    margin-left: auto;
    display: flex;
    align-items: center;
    gap: 9px;
    padding-right: 3px;
}
.help-button {
    width: 16px;
    height: 16px;
    border-radius: 50%;
    background: #4a80d0;
    color: #fff;
    font-size: 12px;
    font-weight: bold;
    line-height: 16px;
}

/* ribbon */
.ribbon {
    display: flex;
    height: 86px;
    padding-right: 6px;
    border-bottom: 1px solid #868d95;
    background: linear-gradient(#fff, #fbfcfd 60%, #e7eaee);
}
.group {
    display: flex;
    flex-direction: column;
    border-right: 1px solid #b4b9bf;
    box-shadow: 1px 0 #fff;
}
.group-body {
    flex: 1;
    display: flex;
    min-height: 0;
}
.group-name {
    position: relative;
    height: 17px;
    padding-right: 20px;
    text-align: center;
    color: #6a7180;
    line-height: 17px;
}
.launcher {
    position: absolute;
    right: 5px;
    bottom: 4px;
    width: 7px;
    height: 7px;
    border: solid #999;
    border-width: 1px 0 0 1px;
}
.launcher::after {
    content: "";
    position: absolute;
    right: 0;
    bottom: 0;
    border: 2px solid #888;
    border-top-color: transparent;
    border-left-color: transparent;
}
.clipboard {
    width: 147px;
}
.font {
    width: 269px;
}
.paragraph {
    width: 228px;
}
.styles {
    flex: 1;
    min-width: 0;
}
.editing {
    width: 76px;
}
.editing .group-name {
    padding: 0;
}
.paste, .change {
    display: flex;
    flex-direction: column;
    align-items: center;
}
.paste {
    width: 49px;
    padding-top: 5px;
    gap: 4px;
}
.paste span {
    line-height: 14px;
}
.stack {
    display: flex;
    flex-direction: column;
    padding-top: 3px;
}
.line {
    height: 22px;
    display: flex;
    align-items: center;
    gap: 3px;
    white-space: nowrap;
}
.line .caret {
    margin-left: 1px;
}
.off {
    color: #a0a0a0;
}
.rows {
    flex-direction: column;
    gap: 6px;
    padding: 10px 0 0 4px;
}
.row {
    display: flex;
    align-items: center;
    height: 22px;
}
.tool {
    width: 24px;
    height: 22px;
    display: flex;
    align-items: center;
    justify-content: center;
    flex: none;
}
.wide {
    width: 34px;
    gap: 5px;
}
.font .wide {
    width: 33px;
}
.sep {
    width: 1px;
    height: 20px;
    margin: 0 3px;
    flex: none;
    background: #d3d7dc;
}
.combo {
    position: relative;
    flex: none;
    height: 22px;
    border: 1px solid #c9cdd2;
    background: #fff;
}
.combo::after {
    content: "";
    position: absolute;
    right: 4px;
    top: 9px;
    border: solid transparent;
    border-width: 3px 3px 0;
    border-top-color: #666;
    pointer-events: none;
}
.combo select {
    width: 100%;
    height: 20px;
    padding: 0 2px;
    border: 0;
    background: none;
    appearance: none;
    color: #000;
    font: inherit;
}
.family {
    width: 93px;
    margin-left: 1px;
}
.size {
    width: 49px;
    margin-left: -1px;
}
.serif {
    color: #222;
    font-family: "Liberation Serif", serif;
    font-size: 15px;
    font-weight: bold;
}
.serif.big {
    font-size: 17px;
}
.serif.small {
    font-size: 12px;
}
.serif.wide {
    font-size: 14px;
}
.serif sub, .serif sup {
    align-self: flex-end;
    color: #2f62bd;
    font-size: 8px;
    line-height: 12px;
}
.serif sup {
    align-self: flex-start;
}
.serif .up, .serif .down {
    margin-top: 4px;
    border: solid transparent;
    border-width: 0 2px 3px;
    border-bottom-color: #2f62bd;
}
.serif .down {
    border-width: 3px 2px 0;
    border-top-color: #2f62bd;
}
.glow {
    color: #fff;
    font-size: 17px;
    font-weight: bold;
    -webkit-text-stroke: 1px #5e9bd3;
    text-shadow: 0 0 3px #7cc0ee;
}
.mark {
    color: #444;
    font-size: 14px;
}
.tool.on, .views .on {
    border: 1px solid #c29337;
    border-radius: 3px;
    background: linear-gradient(#fdd671, #ffe682);
}
.tiny {
    font: bold 7px "Open Sans", sans-serif;
}
.ab {
    font: bold 9px "Open Sans", sans-serif;
}
.fontcolor {
    font: bold 15px "Liberation Serif", serif;
    fill: #2b4f93;
}
.digit {
    font: bold 6px "Liberation Sans", sans-serif;
    fill: #2f62bd;
}
.sort-a, .sort-z {
    font: bold 9px "Liberation Serif", serif;
    fill: #2f62bd;
}
.sort-z {
    fill: #a03030;
}
.rep {
    font: bold 9px "Open Sans", sans-serif;
    fill: #555;
}
.rep.green {
    fill: #1d7c2a;
}

.styles .group-body {
    padding: 5px 0 0 6px;
}
.gallery {
    flex: 1;
    display: flex;
    height: 60px;
    min-width: 0;
    border: 1px solid #c5cace;
    background: #fff;
    overflow: hidden;
}
.style {
    width: 72px;
    flex: none;
    display: flex;
    flex-direction: column;
    align-items: center;
    padding-top: 7px;
    border-radius: 3px;
    white-space: nowrap;
}
.style.selected {
    margin: 1px 0;
    padding-top: 5px;
    border: 1px solid #c29337;
    box-shadow: inset 0 0 0 3px #ffd970;
}
.sample {
    width: 58px;
    height: 30px;
    overflow: hidden;
    color: #000;
    font-family: Lato, sans-serif;
    font-size: 13px;
    line-height: 30px;
    text-align: left;
}
.h1, .h2 {
    color: #365f91;
    font-family: "Noto Serif", "Liberation Serif", serif;
    font-size: 18px;
    font-weight: bold;
}
.h2 {
    color: #4f81bd;
    font-size: 17px;
}
.heading {
    color: #17365d;
    font-size: 30px;
    line-height: 22px;
}
.subtitle {
    color: #4f81bd;
    font-size: 14px;
    font-style: italic;
}
.it {
    font-style: italic;
}
.light {
    color: #808080;
}
.strong {
    font-weight: bold;
}
.sample.blue {
    color: #4f81bd;
}
.gallery-scroll {
    width: 14px;
    margin-left: auto;
    display: flex;
    flex-direction: column;
    border-left: 1px solid #c5cace;
}
.gallery-scroll button {
    flex: 1;
    border-bottom: 1px solid #c5cace;
    line-height: 10px;
}
.gallery-scroll button:first-child {
    background: #f1f2f4;
    opacity: .5;
}
.change {
    width: 59px;
    line-height: 13px;
}
.change svg {
    margin-bottom: 7px;
}
.editing .stack {
    padding-left: 8px;
}

/* document area */
.workspace {
    position: relative;
    flex: 1;
    min-height: 0;
    display: grid;
    grid-template-columns: 24px minmax(0, 1fr) 18px;
    grid-template-rows: 50px minmax(0, 1fr);
    background: linear-gradient(#cdd1d6, #b7babf);
    overflow: hidden;
}
.tab-stop {
    width: 25px;
    height: 24px;
    margin-top: 3px;
    display: flex;
    align-items: center;
    justify-content: center;
    border: 1px solid #7f868e;
}
.hruler {
    justify-self: center;
    margin-top: 3px;
}
.hruler text, .vruler text {
    font: 9px "DejaVu Sans", sans-serif;
    fill: #555;
}
.vruler {
    margin-left: 5px;
}
.ruler-toggle {
    padding: 5px 1px 0;
}
.ruler-toggle span {
    display: block;
    height: 2px;
    margin: 0 4px 2px;
    background: #777;
}
.canvas {
    overflow: hidden;
}
.page {
    width: 1110px;
    min-height: 1400px;
    margin: 0 auto;
    padding: 131px 130px;
    background: #fff;
    border: 1px solid #9aa0a8;
    box-shadow: 0 0 8px rgba(0, 0, 0, .45);
    color: #000;
}

/* drawing */
.beam text {
    font: italic 21px "Liberation Serif", serif;
}
.beam .bold {
    font-weight: bold;
}
.beam .wall {
    text-anchor: middle;
    fill: #222;
}
.beam .name, .beam .joint {
    font-size: 18px;
    font-weight: bold;
}
.beam .joint {
    text-anchor: middle;
}
.beam .thin-text {
    fill: #444;
}
.beam .red text {
    font-size: 18px;
    fill: #c4161c;
}
.thin {
    fill: none;
    stroke: #7f84c4;
}
.rod {
    fill: #677bd5;
    stroke: #4a58b0;
}
.beam-edge {
    fill: none;
    stroke: #2c3787;
    stroke-width: 2;
}
.load path {
    stroke: #000;
    stroke-width: 2;
    marker-end: url(#arrow);
}
.measure path {
    stroke: #222;
    marker-end: url(#arrow);
}
.cut {
    stroke: #e0332c;
    stroke-dasharray: 3 1;
}
.dash {
    fill: none;
    stroke: #333;
    stroke-dasharray: 3 2;
    marker-end: url(#arrow);
}
.blue-dash {
    stroke: #4a55a5;
    marker-end: url(#arrow-blue);
}

.table-line {
    position: relative;
    width: 475px;
    margin-left: 186px;
}
.values {
    width: 476px;
    table-layout: fixed;
    border-collapse: collapse;
    font-family: Lato, sans-serif;
    font-size: 18px;
    font-style: italic;
    font-weight: bold;
    line-height: 23px;
    text-align: center;
}
.values th, .values td {
    padding: 0;
    border: 1px solid #000;
    vertical-align: top;
}
.values th {
    line-height: 22px;
}
.values td {
    height: 38px;
}
.values .plain {
    font-family: "Open Sans", sans-serif;
    font-weight: normal;
    line-height: 26px;
}
.blue {
    color: #0070c0;
}
.bad, .gram {
    text-decoration: underline wavy #e33 1px;
    text-underline-offset: 2px;
}
.gram {
    text-decoration-color: #2e9b2e;
}
.c71 { width: 71px; }
.c86 { width: 86px; }
.c67 { width: 67px; }
.c44 { width: 44px; }
.c50 { width: 50px; }
.c63 { width: 63px; }

/* paste options */
.paste-options {
    position: absolute;
    left: 479px;
    top: 11px;
    width: 218px;
    color: #333;
}
.paste-menu {
    height: 75px;
    padding: 1px;
    border: 1px solid #a7abb0;
    background: #fff;
    box-shadow: 2px 2px 3px rgba(0, 0, 0, .25);
}
.paste-title {
    height: 18px;
    padding-left: 7px;
    background: #f0f2f5;
    font-weight: bold;
    line-height: 20px;
}
.paste-icons {
    display: flex;
    gap: 1px;
    height: 31px;
    border-bottom: 1px solid #ddd;
}
.paste-icons button {
    width: 29px;
    height: 30px;
    display: flex;
    align-items: center;
    justify-content: center;
}
.paste-icons .picked {
    border: 2px solid #d6a03c;
    border-radius: 3px;
    background: #ffe99a;
}
.board {
    fill: #fce0ab;
    stroke: #c9a774;
}
.clip {
    fill: #eee;
    stroke: #888;
}
.only-text {
    font: bold 15px "Open Sans", sans-serif;
}
.paste-default {
    display: block;
    margin-left: 24px;
    padding-left: 8px;
    border-left: 1px solid #ddd;
    line-height: 23px;
    white-space: nowrap;
}
.ctrl {
    width: 61px;
    height: 23px;
    display: flex;
    align-items: center;
    justify-content: center;
    gap: 4px;
    border: 1px solid #a7abb0;
    background: #cfd3d9;
}
.tooltip {
    position: absolute;
    left: 62px;
    top: 62px;
    height: 23px;
    padding: 0 4px;
    border: 1px solid #767676;
    border-radius: 2px;
    background: linear-gradient(#fff, #e6e7f1);
    box-shadow: 2px 2px 3px rgba(0, 0, 0, .3);
    line-height: 21px;
    white-space: nowrap;
}

.scrollbar {
    display: flex;
    flex-direction: column;
    margin-top: -24px;
    background: #d7dce4;
}
.scrollbar button {
    height: 17px;
    display: flex;
    align-items: center;
    justify-content: center;
}
.scrollbar .first {
    border-top: 1px solid #a9afb8;
}
.track {
    flex: 1;
}
.thumb {
    height: 42%;
    margin: 0 1px;
    display: flex;
    align-items: center;
    justify-content: center;
    border: 1px solid #8d949c;
    border-radius: 2px;
    background: linear-gradient(90deg, #fff, #dfe3e8);
}

.activate {
    position: absolute;
    right: 41px;
    bottom: 17px;
    width: 400px;
    color: rgba(150, 150, 150, .6);
    pointer-events: none;
}
.activate h2 {
    margin: 0;
    font-size: 19px;
    font-weight: normal;
    line-height: 26px;
}
.activate p {
    margin: 0;
    font-size: 14px;
    line-height: 20px;
}

/* status bar */
.status {
    display: flex;
    align-items: center;
    height: 22px;
    border-top: 1px solid #8a929c;
    background: linear-gradient(#e3e6ea, #bcc0c6);
}
.cell {
    height: 20px;
    padding: 0 8px;
    border-right: 1px solid #8a929c;
    line-height: 18px;
}
.cell svg {
    margin-top: 1px;
}
.views {
    margin-left: auto;
    display: flex;
    align-items: center;
    padding-left: 3px;
    border-left: 1px solid #8a929c;
}
.views button {
    width: 18px;
    height: 19px;
    display: flex;
    align-items: center;
    justify-content: center;
}
.zoom-value {
    width: 46px;
}
.zoom {
    display: flex;
    align-items: center;
    padding-right: 4px;
}
.round {
    width: 16px;
    height: 16px;
    display: flex;
    align-items: center;
    justify-content: center;
    border: 1px solid #777e88;
    border-radius: 50%;
    background: #f5f6f8;
}
.zoom input {
    width: 100px;
    height: 14px;
    margin: 0;
    appearance: none;
    background: linear-gradient(#8d949e, #8d949e) center / 100% 1px no-repeat;
}
.zoom input::-webkit-slider-thumb {
    appearance: none;
    width: 9px;
    height: 13px;
    border: 1px solid #666d77;
    border-radius: 1px 1px 5px 5px;
    background: #f5f6f8;
}

/* taskbar */
.taskbar {
    display: flex;
    height: 40px;
    background: #636363;
    color: #fff;
}
.taskbar button {
    width: 62px;
    display: flex;
    align-items: center;
    justify-content: center;
}
.taskbar .start {
    width: 50px;
}
.taskbar .open {
    width: 60px;
    margin: 0 2px 0 1px;
    border: 1px solid #8f8f8f;
    background: #7c7c7c;
}
.taskbar .open.active {
    width: 59px;
    margin: 0;
    padding-right: 6px;
    border: 1px solid #ddd;
    border-right: 4px double #ddd;
    background: #a2a2a2;
}
.badge {
    font: 9px "Open Sans", sans-serif;
    fill: #fff;
}
.tray {
    margin-left: auto;
    display: flex;
    align-items: center;
    gap: 14px;
}
.tray svg + svg + svg {
    margin-left: -6px;
}
.clock {
    width: 80px;
    margin-left: -14px;
    text-align: center;
    font-size: 12px;
    line-height: 17px;
}
```
